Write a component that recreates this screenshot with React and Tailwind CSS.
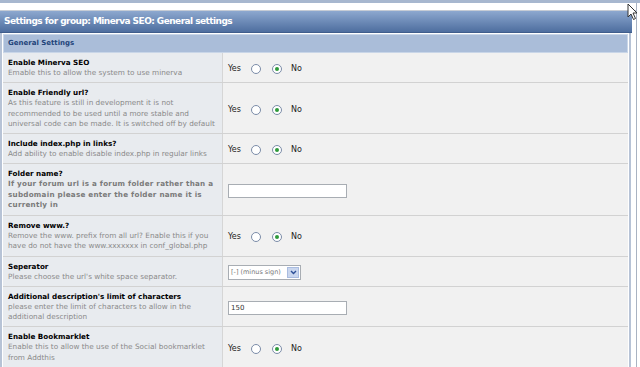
import React from 'react';

const rows = [
  { title: 'Enable Minerva SEO', desc: ['Emable this to allow the system to use minerva'], type: 'radio' },
  {
    title: 'Enable Friendly url?',
    desc: [
      'As this feature is still in development it is not',
      'recommended to be used until a more stable and',
      'universal code can be made. It is switched off by default',
    ],
    type: 'radio',
  },
  { title: 'Include index.php in links?', desc: ['Add ability to enable disable index.php in regular links'], type: 'radio' },
  {
    title: 'Folder name?',
    desc: ['If your forum url is a forum folder rather than a', 'subdomain please enter the folder name it is', 'currently in'],
    boldDesc: true,
    type: 'input',
    value: '',
  },
  {
    title: 'Remove www.?',
    desc: ['Remove the www. prefix from all url? Enable this if you', 'have do not have the www.xxxxxxx in conf_global.php'],
    type: 'radio',
  },
  { title: 'Seperator', desc: ["Please choose the url's white space separator."], type: 'select' },
  {
    title: "Additional description's limit of characters",
    desc: ['please enter the limit of characters to allow in the', 'additional description'],
    type: 'input',
    value: '150',
  },
  {
    title: 'Enable Bookmarklet',
    desc: ['Enable this to allow the use of the Social bookmarklet', 'from Addthis'],
    type: 'radio',
  },
];

const Radio = ({ checked }) => (
  <span className="w-[10px] h-[10px] rounded-full border border-[#7b8ca8] bg-white flex items-center justify-center">
    {checked && <span className="w-[4px] h-[4px] rounded-full bg-[#2f9a3a]" />}
  </span>
);

const Control = ({ row }) => {
  if (row.type === 'radio') {
    return (
      <div className="flex items-center text-[8px] text-[#222]">
        <span>Yes</span>
        <span className="ml-[10px]"><Radio /></span>
        <span className="ml-[11px]"><Radio checked /></span>
        <span className="ml-[9px]">No</span>
      </div>
    );
  }
  if (row.type === 'input') {
    return (
      <div className="w-[119px] h-[14px] border border-[#a8adb3] bg-white text-[7px] text-[#333] leading-[12px] px-[2px]">
        {row.value}
      </div>
    );
  }
  return (
    <div className="w-[73px] h-[15px] border border-[#a8adb3] bg-white flex items-center justify-between pl-[2px] pr-px">
      <span className="text-[6.5px] text-[#777]">[-] (minus sign)</span>
      <span className="w-[12px] h-[11px] bg-[#c9d6ee] border border-[#a9bce0] flex items-center justify-center">
        <svg width="7" height="5" viewBox="0 0 7 5">
          <path d="M1 1 L3.5 3.5 L6 1" fill="none" stroke="#2c4f96" strokeWidth="1.4" />
        </svg>
      </span>
    </div>
  );
};

export default function App() {
  return (
    <div className="relative w-[640px] h-[367px] overflow-hidden bg-white font-['DejaVu_Sans',sans-serif]">
      <div className="h-[3px] bg-[#a7b7cf]" />
      <div className="w-[637px] h-full border-r border-[#a9b3c2]">
        <div className="h-[7px]" />
        <div className="h-px bg-[#c6ccd5]" />
        <div className="w-[632px]">
          <div className="h-[22px] bg-gradient-to-b from-[#8da8cf] to-[#4e6e9f] flex items-center pl-[4px] text-white font-bold text-[9px] tracking-[-0.55px] border-b border-[#3f5d8c]">
            Settings for group: Minerva SEO: General settings
          </div>
          <div className="w-[631px] border-l-2 border-r-2 border-[#b7c3d6] px-px pt-px">
            <div className="h-[19px] bg-[#aabdd9] border border-[#c9d6e8] flex items-center pl-[4px] text-[7px] font-bold text-[#1f4479]">
              General Settings
            </div>
            {rows.map((row, i) => (
              <div key={i} className="flex border-b border-[#d2d2d2]">
                <div className="w-[220px] shrink-0 bg-[#e8ebef] border-r border-[#d6d6d6] pl-[5px] pt-[4px] pb-[4px]">
                  <div className="text-[7.2px] font-bold text-black leading-[11px]">{row.title}</div>
                  {row.desc.map((d, j) => (
                    <div
                      key={j}
                      className={
                        row.boldDesc
                          ? 'text-[7.2px] font-bold text-[#7a7a7a] leading-[10.5px] tracking-[0.25px]'
                          : 'text-[7.3px] text-[#8a8a8a] leading-[10.3px]'
                      }
                    >
                      {d}
                    </div>
                  ))}
                </div>
                <div className="flex-1 bg-[#f1f1f1] flex items-center pl-[5px] pt-[3px]">
                  <Control row={row} />
                </div>
              </div>
            ))}
            <div className="flex h-[20px]">
              <div className="w-[220px] shrink-0 bg-[#e8ebef] border-r border-[#d6d6d6]" />
              <div className="flex-1 bg-[#f1f1f1]" />
            </div>
          </div>
        </div>
      </div>
      <svg className="absolute left-[627px] top-[3px]" width="12" height="18" viewBox="0 0 12 18">
        <path d="M1 1 L1 14 L4 11 L6.5 16.5 L8.5 15.5 L6 10 L10 10 Z" fill="white" stroke="#333" strokeWidth="1" />
      </svg>
    </div>
  );
}
